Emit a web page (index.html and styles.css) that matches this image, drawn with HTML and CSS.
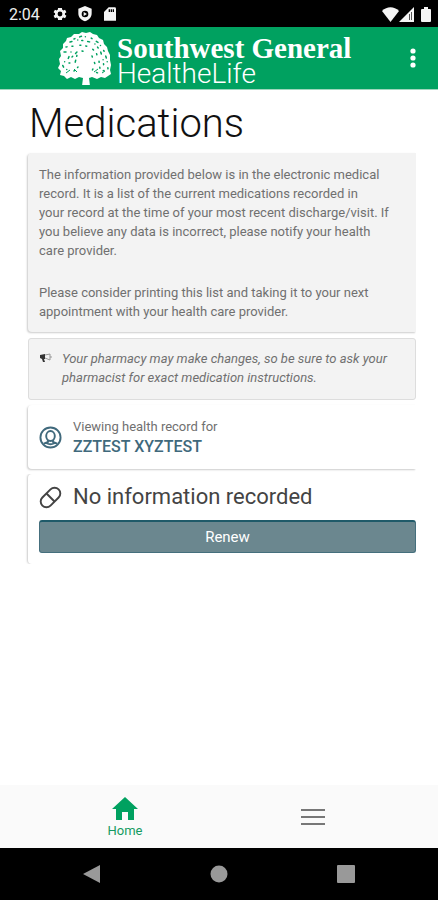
FILE: index.html
```html
<!DOCTYPE html>
<html lang="en">
<head>
    <meta charset="UTF-8">
    <meta name="viewport" content="width=device-width, initial-scale=1.0">
    <title>Medications</title>
    <link rel="stylesheet" href="styles.css">
</head>
<body>
    <div class="status-bar">
        <span class="clock">2:04</span>
        <svg class="status-icon" viewBox="0 0 24 24"><path fill-rule="evenodd" d="M19.4 13a7.500 7.500 0 0 0 0-2l2.200-1.700-2-3.500-2.600 1a8 8 0 0 0-1.700-1L14.900 3H9.100l-.4 2.800a8 8 0 0 0-1.700 1l-2.600-1-2 3.500L4.600 11a7.500 7.500 0 0 0 0 2l-2.200 1.700 2 3.500 2.600-1a8 8 0 0 0 1.700 1l.4 2.800h5.800l.4-2.800a8 8 0 0 0 1.700-1l2.600 1 2-3.500zM12 15.600a3.600 3.600 0 1 1 0-7.200 3.600 3.600 0 0 1 0 7.200z"/></svg>
        <svg class="status-icon" viewBox="0 0 24 24"><path fill-rule="evenodd" d="M12 0l10 4v7c0 6-4 10-10 12C6 21 2 17 2 11V4zm0 7a5 5 0 1 0 0 10 5 5 0 0 0 0-10zm-2 2l5 3-5 3z"/></svg>
        <svg class="status-icon" viewBox="0 0 24 24"><path fill-rule="evenodd" d="M10 2h9a2 2 0 0 1 2 2v18H3V9zm0 3v4h2V5zm3 0v4h2V5zm3 0v4h2V5z"/></svg>
        <span class="spacer"></span>
        <svg class="wifi" viewBox="0 0 17 15"><path d="M0 4C5-1 12-1 17 4L8.500 15z"/></svg>
        <svg class="signal" viewBox="0 0 15 15"><path d="M0 15L15 0v15z"/><path d="M10.500 7v6M12.500 5v8" stroke="#555" fill="none"/></svg>
        <svg class="battery" viewBox="0 0 10 15"><path d="M3 0h4v2h2q1 0 1 1v11q0 1-1 1H1q-1 0-1-1V3q0-1 1-1h2z"/></svg>
    </div>

    <header class="app-bar">
        <div class="brand">
            <svg class="tree" viewBox="0 0 54 54">
                <path fill="#fff" d="M21 3l3-2 4 1 4-1 3 2 4 1 2 3 4 2 1 4 3 3 1 4 2 4v5l1 5-1 5 1 4-3 2-3 2-4-1-4 2-5-2-3 1 1 8h-8l1-8-4-1-4 2-4-2-4 2-3-3-4-1 1-4-3-3 2-4-1-5 2-3-1-5 3-3 0-4 3-3 1-3 4-1 3-3z"/>
                <g fill="none" stroke="#00a160" stroke-width="1.500" stroke-linecap="round">
                    <path stroke-dasharray="1 5 2 4 0 6" d="M16 8L24 5L33 7L41 12L46 20L49 29L50 38"/>
                    <path stroke-dasharray="2 6 0 4 1 5" d="M12 11L20 9L28 10L36 12L42 19L45 28L46 37"/>
                    <path stroke-dasharray="1 5 1 7" d="M8 16L16 15L24 14L32 16L38 21L41 30L42 38"/>
                    <path stroke-dasharray="2 5 0 5" d="M6 21L13 21L10 28L4 33L7 39L13 37"/>
                    <path stroke-dasharray="1 4 2 6" d="M14 26L20 20L17 32L11 32M16 40L20 36"/>
                    <path stroke-dasharray="1 6" d="M34 25L37 33L34 40L40 42L47 39M24 20L30 22"/>
                </g>
                <path fill="none" stroke="#00a160" d="M8 42l4-3M19 41l-3-3M36 41l4-3M44 42l3-2"/>
            </svg>
            <div class="brand-text">
                <span class="brand-name">Southwest General</span>
                <span class="brand-product">HealtheLife</span>
            </div>
        </div>
        <button class="more" type="button" aria-label="More options">
            <svg viewBox="0 0 6 20"><circle cx="3" cy="3" r="2.600"/><circle cx="3" cy="10" r="2.600"/><circle cx="3" cy="17" r="2.600"/></svg>
        </button>
    </header>

    <main>
        <h1>Medications</h1>

        <section class="card info">
            <p>The information provided below is in the electronic medical record. It is a list of the current medications recorded in your&nbsp;record at the time of your most recent discharge/visit. If you believe any data is incorrect, please notify your health care&nbsp;provider.</p>
            <p>Please consider printing this list and taking it to your next appointment with your health care provider.</p>
        </section>

        <section class="notice">
            <svg class="horn" viewBox="0 0 12 10"><path fill="#333" d="M0 2l5-1v5l-1 0 1 3H3L2 6 0 5z"/><path fill="none" stroke="#999" d="M5 2l5-1v6L5 5M11 3v2"/></svg>
            <p>Your pharmacy may make changes, so be sure to ask your pharmacist for exact medication instructions.</p>
        </section>

        <section class="card person">
            <svg class="card-icon" viewBox="0 0 24 24" fill="none" stroke="#40697c" stroke-width="2"><circle cx="12" cy="12" r="10.500"/><ellipse cx="12" cy="10.500" rx="4.500" ry="5.200"/><path d="M9.500 14.500v2L5 18.500M14.500 14.500v2l4.500 2M8 18q4 2 8 0"/></svg>
            <div>
                <p class="label">Viewing health record for</p>
                <p class="name">ZZTEST XYZTEST</p>
            </div>
        </section>

        <section class="card record">
            <div class="record-title">
                <svg class="card-icon" viewBox="0 0 24 24" fill="none" stroke="#444" stroke-width="2"><rect x="0" y="6" width="24" height="12" rx="6" transform="rotate(-45 12 12)"/><path d="M7.800 7.800l8.400 8.400"/></svg>
                <h2>No information recorded</h2>
            </div>
            <button class="renew" type="button">Renew</button>
        </section>
    </main>

    <nav class="tabs">
        <a class="tab" href="#home">
            <svg class="home" viewBox="0 0 26 23"><path d="M13 0l13 12h-4v11h-6v-8h-6v8H4V12H0z"/></svg>
            Home
        </a>
        <button class="tab" type="button" aria-label="Menu">
            <svg class="menu" viewBox="0 0 24 18"><path d="M0 2h24M0 9h24M0 16h24"/></svg>
        </button>
    </nav>

    <div class="system-nav">
        <button type="button" aria-label="Back"><svg viewBox="0 0 18 18"><path d="M17 0v18L0 9z"/></svg></button>
        <button type="button" aria-label="Home screen"><svg viewBox="0 0 18 18"><circle cx="9" cy="9" r="8.500"/></svg></button>
        <button type="button" aria-label="Recent apps"><svg viewBox="0 0 18 18"><rect width="18" height="18" rx="1"/></svg></button>
    </div>
</body>
</html>
```
FILE: styles.css
```css
* {
    box-sizing: border-box;
}

body {
    font-family: Roboto, sans-serif;
    margin: 0;
    min-height: 100vh;
    display: flex;
    flex-direction: column;
    background: #fff;
    color: #707070;
    font-size: 13px;
    line-height: 19px;
}

h1, h2, p {
    margin: 0;
    font-weight: 400;
}

button {
    font-family: inherit;
    border: 0;
    padding: 0;
    background: none;
}

svg {
    display: block;
    flex-shrink: 0;
}

.status-bar {
    display: flex;
    align-items: center;
    height: 27px;
    padding: 1px 7px 0 9px;
    background: #000;
    color: #eee;
    fill: #f5f5f5;
}

.clock {
    font-size: 16px;
    font-weight: 400;
    margin-right: 3px;
}

.status-icon {
    width: 16px;
    height: 16px;
    margin-left: 9px;
}

.spacer {
    flex-grow: 1;
}

.wifi {
    width: 17px;
    height: 15px;
}

.signal {
    width: 15px;
    height: 15px;
}

.battery {
    width: 10px;
    height: 15px;
    margin-left: 7px;
}

.app-bar {
    display: flex;
    align-items: center;
    height: 63px;
    padding: 0 22px 0 58px;
    background: #00a160;
    color: #fff;
    border-bottom: 1px solid #9fd6bd;
}

.brand {
    display: flex;
    align-items: center;
    flex-grow: 1;
    gap: 5px;
}

.tree {
    width: 54px;
    height: 54px;
}

.brand-text {
    display: flex;
    flex-direction: column;
    padding-top: 6px;
    white-space: nowrap;
}

.brand-name {
    font-family: "Liberation Serif", serif;
    font-size: 29px;
    font-weight: 700;
    line-height: 25px;
}

.brand-product {
    font-size: 28px;
    font-weight: 300;
    line-height: 25px;
}

.more svg {
    width: 6px;
    height: 20px;
    fill: #fff;
}

main {
    flex-grow: 1;
    padding: 11px 22px 0 28px;
}

h1 {
    padding-left: 1px;
    margin-bottom: 6px;
    color: #111;
    font-size: 40px;
    font-weight: 300;
    line-height: 46px;
}

.card {
    border-radius: 4px 0 0 4px;
    box-shadow: -1px 1px 2px #ccc;
    clip-path: inset(-4px 0 -4px -4px);
}

.info {
    padding: 12px 11px 11px;
    background: #f3f3f3;
}

.info p + p {
    margin-top: 23px;
}

.notice {
    display: flex;
    gap: 10px;
    margin-top: 6px;
    padding: 10px 11px 12px;
    border: 1px solid #ddd;
    border-radius: 3px;
    background: #f3f3f3;
    font-style: italic;
}

.horn {
    width: 12px;
    height: 10px;
    margin-top: 4px;
}

.card-icon {
    width: 23px;
    height: 23px;
    overflow: visible;
}

.person {
    display: flex;
    align-items: center;
    gap: 11px;
    margin-top: 5px;
    padding: 12px 11px;
}

.name {
    color: #40697c;
    font-size: 16px;
    font-weight: 500;
    line-height: 21px;
}

.record {
    margin-top: 5px;
    padding: 10px 0 11px 11px;
    box-shadow: -1px 0 2px #ccc;
    clip-path: inset(0 0 0 -4px);
}

.record-title {
    display: flex;
    align-items: center;
    gap: 11px;
    margin-bottom: 10px;
}

h2 {
    color: #444;
    font-size: 22px;
    line-height: 26px;
}

.renew {
    display: block;
    width: 100%;
    height: 33px;
    border: 1px solid #456f7d;
    border-top: 2px solid #1f5a69;
    border-radius: 3px;
    background: #6b878f;
    color: #fff;
    font-size: 15px;
}

.tabs {
    display: grid;
    grid-template-columns: 1fr 1fr;
    height: 63px;
    padding: 0 31px;
    background: #fafafa;
}

.tab {
    display: flex;
    flex-direction: column;
    align-items: center;
    justify-content: center;
    gap: 1px;
    color: #159a62;
    text-decoration: none;
}

a.tab {
    padding-top: 4px;
}

.home {
    width: 26px;
    height: 23px;
    fill: #00a160;
}

.menu {
    width: 24px;
    height: 18px;
    stroke: #777;
    stroke-width: 2;
}

.system-nav {
    display: grid;
    grid-template-columns: 1fr 1fr 1fr;
    align-items: center;
    justify-items: center;
    height: 52px;
    padding: 0 28px;
    background: #000;
    fill: #999;
}

.system-nav svg {
    width: 18px;
    height: 18px;
}
```
